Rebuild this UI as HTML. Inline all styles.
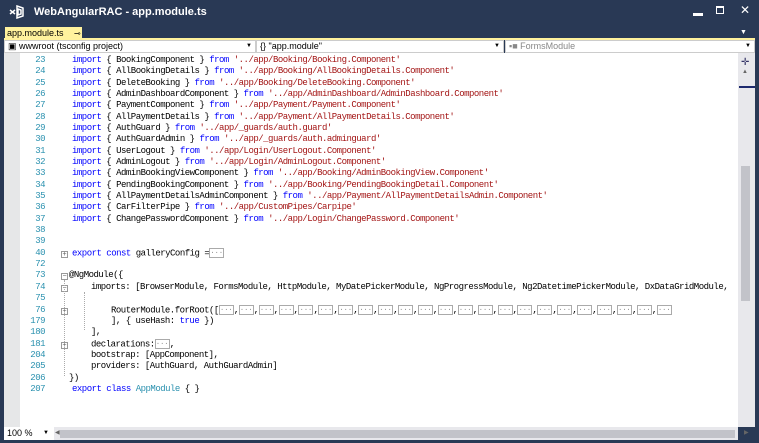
<!DOCTYPE html>
<html><head><meta charset="utf-8"><style>
*{margin:0;padding:0;box-sizing:border-box}
body{width:759px;height:443px;overflow:hidden;background:#293955;font-family:"Liberation Sans",sans-serif;position:relative}
.title{position:absolute;left:34px;top:6px;color:#fff;font-size:11px;font-weight:bold}
.tab{position:absolute;left:5px;top:27px;width:77px;height:12px;background:#fff29d;font-size:9px;line-height:12px;padding-left:2px;color:#000}
.yline{position:absolute;left:4px;top:38px;width:751px;height:2px;background:#fff29d}
.dd{position:absolute;top:40px;height:13px;background:#fff;border:1px solid #ccc;font-size:9px;line-height:11px;padding-left:3px;color:#000}
.dd b{position:absolute;right:3px;top:0;font-size:6px;font-weight:normal}
.editor{position:absolute;left:4px;top:53px;width:751px;height:374px;background:#fff}
.gut{position:absolute;left:4px;top:53px;width:16px;height:374px;background:#e6e7e8}
.ln{position:absolute;left:20px;width:25px;text-align:right;color:#2b91af;font-family:"Liberation Mono",monospace;font-size:9px;letter-spacing:-0.5px}
.cd{position:absolute;left:72px;white-space:pre;font-family:"Liberation Mono",monospace;font-size:9px;letter-spacing:-0.5px;color:#000}
.k{color:#0000ff}.s{color:#a31515}.t{color:#2b91af}
.bx{display:inline-block;border:1px solid #aaa;width:15px;height:10px;line-height:6px;vertical-align:middle;color:#888;font-size:7px;text-align:center;letter-spacing:0}
.pm{position:absolute;left:61px;width:7px;height:7px;border:1px solid #999;font-size:7px;line-height:5px;text-align:center;color:#555;background:#fff}
.vs{position:absolute;left:738px;top:53px;width:17px;height:374px;background:#e8e8ec}
.thumb{position:absolute;left:741px;top:166px;width:9px;height:135px;background:#c2c3c9}
.hs{position:absolute;left:4px;top:427px;width:734px;height:13px;background:#e8e8ec}
</style></head><body>
<svg style="position:absolute;left:9px;top:5px" width="16" height="14"><path d="M1 5 L6 9 M1 9 L6 5 M8 1 L14 3 L14 11 L8 13 Z M9 4 L12 5 L12 9 L9 10Z" stroke="#fff" stroke-width="1.5" fill="none"/></svg>
<div class="title">WebAngularRAC - app.module.ts</div>
<div style="position:absolute;left:693px;top:8px;color:#fff;font-size:10px">▬</div>
<div style="position:absolute;left:716px;top:6px;width:8px;height:8px;border:1px solid #fff;border-top-width:2px"></div>
<div style="position:absolute;left:740px;top:3px;color:#fff;font-size:12px">✕</div>
<div style="position:absolute;left:740px;top:29px;color:#fff;font-size:7px">▼</div>
<div class="tab">app.module.ts <span style="margin-left:8px;font-size:8px">⊸ ✕</span></div>
<div class="yline"></div>
<div class="dd" style="left:4px;width:252px">▣ wwwroot (tsconfig project)<b>▼</b></div>
<div class="dd" style="left:256px;width:248px">{} "app.module"<b>▼</b></div>
<div class="dd" style="left:505px;width:250px;color:#888">▪■ FormsModule<b style="color:#000">▼</b></div>
<div class="editor"></div>
<div class="gut"></div>
<div class="vs"></div>
<div style="position:absolute;left:741px;top:57px;font-size:10px;color:#336">✛</div>
<div style="position:absolute;left:742px;top:69px;font-size:6px;color:#666">▲</div>
<div style="position:absolute;left:739px;top:86px;width:16px;height:2px;background:#1e2a6e"></div>
<div class="thumb"></div>
<div class="hs"></div>
<div style="position:absolute;left:4px;top:427px;width:50px;height:13px;background:#fff;font-size:9px;line-height:13px;padding-left:3px">100 %<span style="position:absolute;left:39px;font-size:6px">▼</span></div>
<div style="position:absolute;left:60px;top:430px;width:675px;height:8px;background:#c2c3c9"></div>
<div style="position:absolute;left:55px;top:429px;font-size:6px;color:#666">◀</div>
<div style="position:absolute;left:744px;top:429px;font-size:6px;color:#666">▶</div>

<div class="ln" style="top:55px">23</div><div class="cd" style="top:55px"><span class="k">import</span> { BookingComponent } <span class="k">from</span> <span class="s">'../app/Booking/Booking.Component'</span></div>
<div class="ln" style="top:66px">24</div><div class="cd" style="top:66px"><span class="k">import</span> { AllBookingDetails } <span class="k">from</span> <span class="s">'../app/Booking/AllBookingDetails.Component'</span></div>
<div class="ln" style="top:78px">25</div><div class="cd" style="top:78px"><span class="k">import</span> { DeleteBooking } <span class="k">from</span> <span class="s">'../app/Booking/DeleteBooking.Component'</span></div>
<div class="ln" style="top:89px">26</div><div class="cd" style="top:89px"><span class="k">import</span> { AdminDashboardComponent } <span class="k">from</span> <span class="s">'../app/AdminDashboard/AdminDashboard.Component'</span></div>
<div class="ln" style="top:100px">27</div><div class="cd" style="top:100px"><span class="k">import</span> { PaymentComponent } <span class="k">from</span> <span class="s">'../app/Payment/Payment.Component'</span></div>
<div class="ln" style="top:112px">28</div><div class="cd" style="top:112px"><span class="k">import</span> { AllPaymentDetails } <span class="k">from</span> <span class="s">'../app/Payment/AllPaymentDetails.Component'</span></div>
<div class="ln" style="top:123px">29</div><div class="cd" style="top:123px"><span class="k">import</span> { AuthGuard } <span class="k">from</span> <span class="s">'../app/_guards/auth.guard'</span></div>
<div class="ln" style="top:134px">30</div><div class="cd" style="top:134px"><span class="k">import</span> { AuthGuardAdmin } <span class="k">from</span> <span class="s">'../app/_guards/auth.adminguard'</span></div>
<div class="ln" style="top:146px">31</div><div class="cd" style="top:146px"><span class="k">import</span> { UserLogout } <span class="k">from</span> <span class="s">'../app/Login/UserLogout.Component'</span></div>
<div class="ln" style="top:157px">32</div><div class="cd" style="top:157px"><span class="k">import</span> { AdminLogout } <span class="k">from</span> <span class="s">'../app/Login/AdminLogout.Component'</span></div>
<div class="ln" style="top:168px">33</div><div class="cd" style="top:168px"><span class="k">import</span> { AdminBookingViewComponent } <span class="k">from</span> <span class="s">'../app/Booking/AdminBookingView.Component'</span></div>
<div class="ln" style="top:180px">34</div><div class="cd" style="top:180px"><span class="k">import</span> { PendingBookingComponent } <span class="k">from</span> <span class="s">'../app/Booking/PendingBookingDetail.Component'</span></div>
<div class="ln" style="top:191px">35</div><div class="cd" style="top:191px"><span class="k">import</span> { AllPaymentDetailsAdminComponent } <span class="k">from</span> <span class="s">'../app/Payment/AllPaymentDetailsAdmin.Component'</span></div>
<div class="ln" style="top:202px">36</div><div class="cd" style="top:202px"><span class="k">import</span> { CarFilterPipe } <span class="k">from</span> <span class="s">'../app/CustomPipes/Carpipe'</span></div>
<div class="ln" style="top:214px">37</div><div class="cd" style="top:214px"><span class="k">import</span> { ChangePasswordComponent } <span class="k">from</span> <span class="s">'../app/Login/ChangePassword.Component'</span></div>
<div class="ln" style="top:225px">38</div>
<div class="ln" style="top:236px">39</div>
<div class="pm" style="top:251px">+</div><div class="ln" style="top:248px">40</div><div class="cd" style="top:248px"><span class="k">export const</span> galleryConfig =<span class="bx">...</span></div>
<div class="ln" style="top:259px">72</div>
<div class="pm" style="top:273px">−</div><div class="ln" style="top:270px">73</div><div class="cd" style="left:69px;top:270px">@NgModule({</div>
<div class="pm" style="top:285px">−</div><div class="ln" style="top:282px">74</div><div class="cd" style="left:91px;top:282px">imports: [BrowserModule, FormsModule, HttpModule, MyDatePickerModule, NgProgressModule, Ng2DatetimePickerModule, DxDataGridModule,</div>
<div class="ln" style="top:293px">75</div>
<div class="pm" style="top:308px">+</div><div class="ln" style="top:305px">76</div><div class="cd" style="left:111px;top:305px">RouterModule.forRoot([<span class="bx">...</span>,<span class="bx">...</span>,<span class="bx">...</span>,<span class="bx">...</span>,<span class="bx">...</span>,<span class="bx">...</span>,<span class="bx">...</span>,<span class="bx">...</span>,<span class="bx">...</span>,<span class="bx">...</span>,<span class="bx">...</span>,<span class="bx">...</span>,<span class="bx">...</span>,<span class="bx">...</span>,<span class="bx">...</span>,<span class="bx">...</span>,<span class="bx">...</span>,<span class="bx">...</span>,<span class="bx">...</span>,<span class="bx">...</span>,<span class="bx">...</span>,<span class="bx">...</span>,<span class="bx">...</span></div>
<div class="ln" style="top:316px">179</div><div class="cd" style="left:111px;top:316px">], { useHash: <span class="k">true</span> })</div>
<div class="ln" style="top:327px">180</div><div class="cd" style="left:91px;top:327px">],</div>
<div class="pm" style="top:342px">+</div><div class="ln" style="top:339px">181</div><div class="cd" style="left:91px;top:339px">declarations:<span class="bx">...</span>,</div>
<div class="ln" style="top:350px">204</div><div class="cd" style="left:91px;top:350px">bootstrap: [AppComponent],</div>
<div class="ln" style="top:361px">205</div><div class="cd" style="left:91px;top:361px">providers: [AuthGuard, AuthGuardAdmin]</div>
<div class="ln" style="top:373px">206</div><div class="cd" style="left:69px;top:373px">})</div>
<div class="ln" style="top:384px">207</div><div class="cd" style="top:384px"><span class="k">export class</span> <span class="t">AppModule</span> { }</div>
<div style="position:absolute;left:64px;top:280px;height:96px;border-left:1px dotted #aaa"></div>
<div style="position:absolute;left:84px;top:292px;height:38px;border-left:1px dotted #aaa"></div>
</body></html>
